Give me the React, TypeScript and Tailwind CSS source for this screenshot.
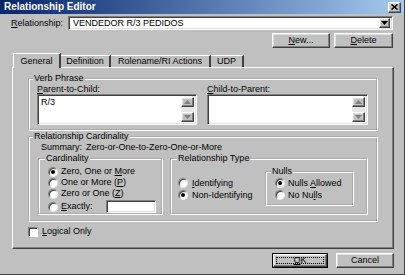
import React from "react";

const raised =
  "border border-t-white border-l-white border-r-[#404040] border-b-[#404040] shadow-[inset_-1px_-1px_0_#808080,inset_1px_1px_0_#dfdfdf] bg-[#c0c0c0]";
const sunken =
  "border border-t-[#808080] border-l-[#808080] border-r-white border-b-white shadow-[inset_1px_1px_0_#404040,inset_-1px_-1px_0_#dfdfdf] bg-white";
const groove = "border-2 border-white [border-style:groove] p-0 m-0 min-w-0";

function Tri({ up, color = "#000" }: { up?: boolean; color?: string }) {
  return (
    <svg width="7" height="4" viewBox="0 0 7 4">
      {up ? (
        <polygon points="3.5,0 7,4 0,4" fill={color} />
      ) : (
        <polygon points="0,0 7,0 3.5,4" fill={color} />
      )}
    </svg>
  );
}

function Radio({ on }: { on?: boolean }) {
  return (
    <div className="w-[10px] h-[10px] shrink-0 rounded-full bg-white border border-t-[#808080] border-l-[#808080] border-r-[#e8e8e8] border-b-[#e8e8e8] shadow-[inset_1px_1px_0_#404040] flex items-center justify-center">
      {on && <div className="w-[4px] h-[4px] rounded-full bg-black" />}
    </div>
  );
}

function TextBox({ text }: { text?: string }) {
  return (
    <div className={`${sunken} h-[31px] flex p-[2px]`}>
      <div className="flex-1 pl-[1px] leading-[10px]">{text}</div>
      <div className="w-[13px] flex flex-col">
        <div className={`${raised} h-[10px] flex items-center justify-center`}>
          <Tri up color="#808080" />
        </div>
        <div className="flex-1 bg-[#e6e6e6]" />
        <div className={`${raised} h-[10px] flex items-center justify-center`}>
          <Tri color="#808080" />
        </div>
      </div>
    </div>
  );
}

export default function App() {
  return (
    <div className="w-[405px] h-[275px] bg-[#c0c0c0] flex flex-col border-r border-b border-[#404040] overflow-hidden text-[9px] text-black font-['Liberation_Sans',Arial,sans-serif] leading-[11px]">
      {/* title bar */}
      <div className="h-[14px] shrink-0 flex items-center justify-between pl-[4px] pr-[3px] bg-linear-to-r from-[#0a246a] to-[#a6caf0]">
        <span className="text-white font-bold text-[10px] leading-[14px]">Relationship Editor</span>
        <div className={`${raised} w-[13px] h-[11px] flex items-center justify-center`}>
          <svg width="7" height="6" viewBox="0 0 7 6">
            <path d="M0.5 0.5 L6.5 5.5 M6.5 0.5 L0.5 5.5" stroke="#000" strokeWidth="1.5" />
          </svg>
        </div>
      </div>

      {/* relationship row */}
      <div className="mt-[2px] h-[14px] flex items-center">
        <div className="w-[68px] pl-[11px]">
          <span className="underline">R</span>elationship:
        </div>
        <div className={`${sunken} w-[325px] h-[14px] flex items-center pl-[4px] pr-[2px]`}>
          <div className="flex-1">VENDEDOR R/3 PEDIDOS</div>
          <div className={`${raised} w-[11px] h-[10px] flex items-center justify-center`}>
            <Tri />
          </div>
        </div>
      </div>

      {/* new/delete */}
      <div className="mt-[3px] h-[15px] flex justify-end gap-[4px] pr-[11px]">
        <div className={`${raised} w-[58px] flex items-center justify-center`}>
          <span>
            <span className="underline">N</span>ew...
          </span>
        </div>
        <div className={`${raised} w-[59px] flex items-center justify-center`}>
          <span>
            <span className="underline">D</span>elete
          </span>
        </div>
      </div>

      {/* tabs */}
      <div className="mt-[5px] h-[14px] flex items-end pl-[13px]">
        <div className="relative z-10 w-[48px] h-[15px] -mb-[1px] bg-[#c0c0c0] border-t border-l border-white border-r-2 border-r-[#404040] flex items-center justify-center">
          General
        </div>
        <div className="w-[50px] h-[12px] border-t border-white border-r-2 border-r-[#404040] flex items-center justify-center">
          Definition
        </div>
        <div className="w-[100px] h-[12px] border-t border-white border-r-2 border-r-[#404040] flex items-center justify-center">
          Rolename/RI Actions
        </div>
        <div className="w-[33px] h-[12px] border-t border-white border-r-2 border-r-[#404040] flex items-center justify-center">
          UDP
        </div>
      </div>

      {/* panel */}
      <div className="ml-[12px] w-[382px] h-[182px] border-t border-l border-white border-r border-b border-r-[#404040] border-b-[#404040] shadow-[inset_-1px_-1px_0_#808080] pt-[5px] pl-[15px]">
        {/* Verb Phrase */}
        <fieldset className={`${groove} w-[350px] pb-[4px]`}>
          <legend className="ml-[3px] px-[1px] leading-[11px]">Verb Phrase</legend>
          <div className="flex gap-[10px] pl-[7px]">
            <div className="w-[160px]">
              <div className="h-[10px] leading-[10px]">
                <span className="underline">P</span>arent-to-Child:
              </div>
              <TextBox text="R/3" />
            </div>
            <div className="w-[161px]">
              <div className="h-[10px] leading-[10px]">
                <span className="underline">C</span>hild-to-Parent:
              </div>
              <TextBox />
            </div>
          </div>
        </fieldset>

        {/* Relationship Cardinality */}
        <fieldset className={`${groove} w-[350px] pb-[5px]`}>
          <legend className="ml-[3px] px-[1px] leading-[11px]">Relationship Cardinality</legend>
          <div className="h-[11px] flex pl-[11px]">
            <span className="w-[45px]">Summary:</span>
            <span>Zero-or-One-to-Zero-One-or-More</span>
          </div>
          <div className="flex gap-[7px] pl-[8px]">
            <fieldset className={`${groove} w-[125px]`}>
              <legend className="ml-[5px] px-[1px] leading-[11px]">Cardinality</legend>
              <div className="pt-[2px] pl-[8px] flex flex-col">
                <div className="h-[11px] flex items-center gap-[3px]">
                  <Radio on />
                  <span>
                    Zero, One or <span className="underline">M</span>ore
                  </span>
                </div>
                <div className="h-[11px] flex items-center gap-[3px]">
                  <Radio />
                  <span>
                    One or More (<span className="underline">P</span>)
                  </span>
                </div>
                <div className="h-[11px] flex items-center gap-[3px]">
                  <Radio />
                  <span>
                    Zero or One (<span className="underline">Z</span>)
                  </span>
                </div>
                <div className="mt-[1px] h-[13px] flex items-center gap-[3px]">
                  <Radio />
                  <span className="w-[42px]">
                    <span className="underline">E</span>xactly:
                  </span>
                  <div className={`${sunken} w-[50px] h-[13px]`} />
                </div>
              </div>
            </fieldset>
            <fieldset className={`${groove} w-[198px]`}>
              <legend className="ml-[5px] px-[1px] leading-[11px]">Relationship Type</legend>
              <div className="flex">
                <div className="w-[93px] pl-[6px] pt-[13px] flex flex-col">
                  <div className="h-[12px] flex items-center gap-[4px]">
                    <Radio />
                    <span>
                      <span className="underline">I</span>dentifying
                    </span>
                  </div>
                  <div className="h-[12px] flex items-center gap-[4px]">
                    <Radio on />
                    <span>Non-Identifying</span>
                  </div>
                </div>
                <fieldset className={`${groove} w-[89px] mt-[2px] pb-[3px]`}>
                  <legend className="ml-[4px] px-[1px] leading-[11px]">Nulls</legend>
                  <div className="pl-[8px] flex flex-col">
                    <div className="h-[12px] flex items-center gap-[3px]">
                      <Radio on />
                      <span>
                        Nulls <span className="underline">A</span>llowed
                      </span>
                    </div>
                    <div className="h-[12px] flex items-center gap-[3px]">
                      <Radio />
                      <span>
                        No Nu<span className="underline">l</span>ls
                      </span>
                    </div>
                  </div>
                </fieldset>
              </div>
            </fieldset>
          </div>
        </fieldset>

        {/* Logical only */}
        <div className="mt-[3px] h-[13px] flex items-center gap-[4px]">
          <div className="w-[10px] h-[10px] bg-white border border-t-[#808080] border-l-[#808080] border-r-white border-b-white shadow-[inset_1px_1px_0_#404040]" />
          <span>
            <span className="underline">L</span>ogical Only
          </span>
        </div>
      </div>

      {/* bottom buttons */}
      <div className="mt-[4px] h-[15px] flex justify-end gap-[8px] pr-[10px]">
        <div className="w-[56px] border border-black">
          <div className={`${raised} h-full p-[2px]`}>
            <div className="h-full border border-dotted border-black flex items-center justify-center">
              <span>
                <span className="underline">O</span>K
              </span>
            </div>
          </div>
        </div>
        <div className={`${raised} w-[58px] flex items-center justify-center`}>Cancel</div>
      </div>
    </div>
  );
}
